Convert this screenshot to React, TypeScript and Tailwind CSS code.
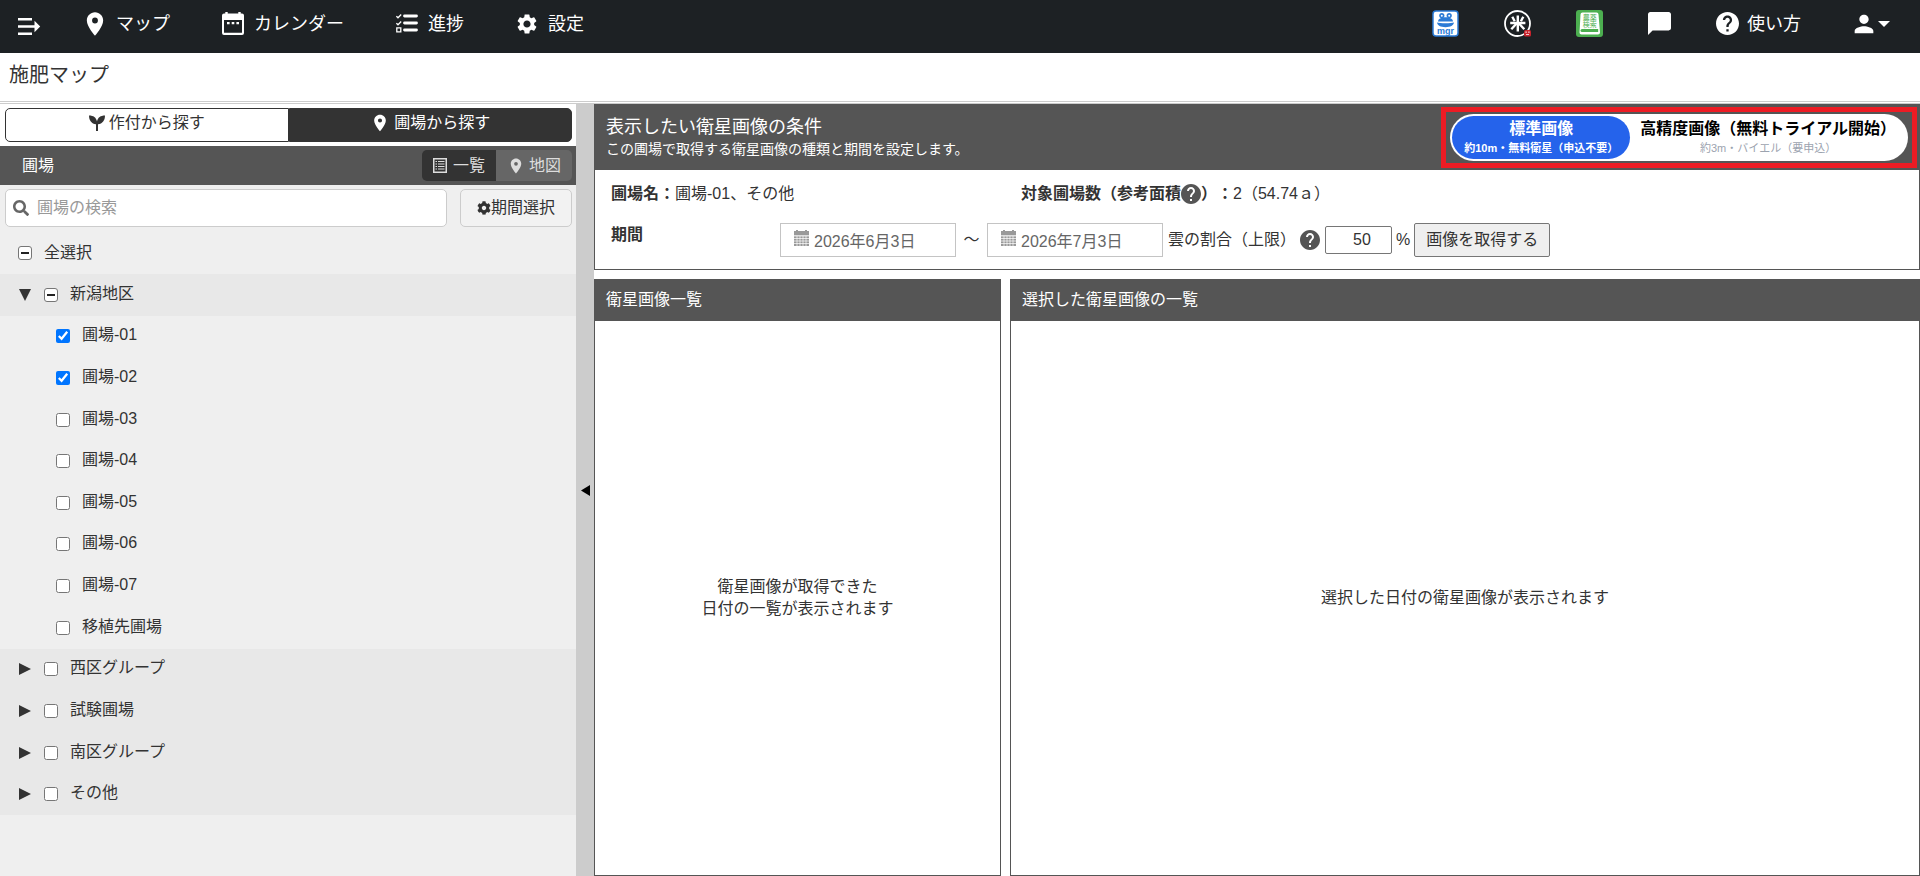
import { useEffect, useRef, useState } from "react";
import type { ReactNode } from "react";
import { MdChatBubble, MdHelp, MdPerson, MdPlace, MdSettings } from "react-icons/md";
import { FaCog, FaSearch } from "react-icons/fa";

const FIELDS = [
  "圃場-01",
  "圃場-02",
  "圃場-03",
  "圃場-04",
  "圃場-05",
  "圃場-06",
  "圃場-07",
  "移植先圃場",
];

const CLOSED_GROUPS = ["西区グループ", "試験圃場", "南区グループ", "その他"];

function DrawerIcon() {
  return (
    <svg viewBox="0 0 23 17" className="h-[17px] w-[23px]" fill="currentColor">
      <path d="M0 0h14v2.400H0zM0 7.300h17v2.400H0zM0 14.600h14V17H0zM16.500 2.800l5.700 5.700-5.700 5.700z" />
    </svg>
  );
}

function CalendarIcon() {
  return (
    <svg viewBox="0 0 22 23" className="h-[23px] w-[22px]" fill="currentColor">
      <path
        fillRule="evenodd"
        d="M3.300 0h2.400v1.500h10.600V0h2.400v1.500H20a2 2 0 0 1 2 2V21a2 2 0 0 1-2 2H2a2 2 0 0 1-2-2V3.500a2 2 0 0 1 2-2h1.300zM2 8v12.800h18V8zM5 10h2.600v2.300H5zM9.700 10h2.600v2.300H9.700zM14.400 10H17v2.300h-2.600z"
      />
    </svg>
  );
}

function ChecklistIcon() {
  return (
    <svg viewBox="0 0 22 19" className="h-[19px] w-[22px]" fill="none" stroke="currentColor">
      <path strokeWidth="2.800" strokeLinecap="round" d="M8.500 2h12M8.500 9h12M8.500 16h12" />
      <path strokeWidth="1.300" d="M.4 2.200L2 3.800 5.200.5M.4 9.200L2 10.800l3.200-3.300M.8 13.800h4v4h-4z" />
    </svg>
  );
}

function FrogIcon() {
  return (
    <svg viewBox="0 0 27 27" className="size-[27px]">
      <rect x="1" y="1" width="25" height="25" rx="3" fill="#fff" stroke="#2b7bd6" strokeWidth="1.500" />
      <circle cx="9.800" cy="5.600" r="2.600" fill="#2b7bd6" />
      <circle cx="17.200" cy="5.600" r="2.600" fill="#2b7bd6" />
      <circle cx="9.800" cy="5.800" r="1" fill="#fff" />
      <circle cx="17.200" cy="5.800" r="1" fill="#fff" />
      <path fill="#2b7bd6" d="M6 11.600C6 9 9 7.200 13.500 7.200S21 9 21 11.600z" />
      <path fill="#2b7bd6" d="M5 12.600c2.500 1 14.500 1 17 0-.5 3-3.500 4.600-8.500 4.600S5.500 15.600 5 12.600z" />
      <text x="13.500" y="23.500" fontSize="9" fontWeight="700" textAnchor="middle" fill="#2b7bd6">
        mgr
      </text>
    </svg>
  );
}

function RiceIcon() {
  return (
    <svg viewBox="0 0 27 27" className="size-[27px]">
      <circle cx="13.500" cy="13.500" r="12.500" fill="none" stroke="#fff" strokeWidth="1.800" />
      <g stroke="#fff" strokeWidth="2.400">
        <path d="M13.800 5.500v16M6.200 13h15.200" />
        <path d="M8.300 6.800l2.400 4.400M19.300 6.800l-2.400 4.400M12.600 13.500L7.300 19.300M15 13.500l5.300 5.800" />
      </g>
      <rect x="20" y="20" width="7" height="6.500" rx="1.500" fill="#c8232c" />
      <path fill="#fff" d="M21.500 21.500h1.200v1.200h-1.200zM24.300 21.500h1.200v1.200h-1.200zM22 24h3v.800h-3z" />
    </svg>
  );
}

function BookIcon() {
  return (
    <svg viewBox="0 0 27 27" className="size-[27px]">
      <rect width="27" height="27" rx="3" fill="#4caf50" />
      <path fill="#fff" d="M6.500 2.500h14a2 2 0 0 1 2 2L24 22.500a2 2 0 0 1-2 2H5.500a2 2 0 0 1-2-2l1-18a2 2 0 0 1 2-2z" />
      <path fill="#4caf50" d="M6 19h16.200v3H6a1.500 1.500 0 0 1 0-3z" />
      <g fill="#4caf50" fontSize="7" textAnchor="middle">
        <text x="13.800" y="9.800">農薬</text>
        <text x="13.800" y="16.800">検索</text>
      </g>
    </svg>
  );
}

function SproutIcon() {
  return (
    <svg viewBox="0 0 16 16" className="size-4" fill="currentColor">
      <path d="M0 .5C4.500.5 7.200 2.500 8 6.500 8.800 2.500 11.500.5 16 .5c0 5-2.500 8.300-7 8.800V16H7V9.300C2.500 8.800 0 5.500 0 .5z" />
    </svg>
  );
}

function ListIcon() {
  return (
    <svg viewBox="0 0 14 15" className="h-[15px] w-[14px]" fill="none" stroke="currentColor">
      <path strokeWidth="1.500" d="M.75.75h12.500v13.500H.75z" />
      <path
        strokeWidth="1.200"
        d="M5 3.500h6.500M5 6h6.500M5 8.500h6.500M5 11h6.500M2.500 3.500H4M2.500 6H4M2.500 8.500H4M2.500 11H4"
      />
    </svg>
  );
}

function DateIcon() {
  return (
    <svg viewBox="0 0 15 16" className="h-4 w-[15px]">
      <path fill="#999" d="M0 1h2V0h2v1h7V0h2v1h2v4.500H0zM0 6h15v10H0z" />
      <path stroke="#fff" strokeWidth=".7" d="M0 6h15M0 8.500h15M0 11h15M0 13.500h15M3 6v10M6 6v10M9 6v10M12 6v10" />
    </svg>
  );
}

function Triangle({ open }: { open?: boolean }) {
  return (
    <svg viewBox="0 0 12 12" className="size-3 fill-[#333]">
      <path d={open ? "M0 0h12L6 12z" : "M0 0v12l12-6z"} />
    </svg>
  );
}

function HelpMark() {
  return <MdHelp viewBox="2 2 20 20" className="size-5 shrink-0 text-[#555]" />;
}

function PartialCheckbox({ id }: { id: string }) {
  const ref = useRef<HTMLInputElement>(null);

  useEffect(() => {
    if (ref.current) ref.current.indeterminate = true;
  }, []);

  return (
    <input
      ref={ref}
      id={id}
      type="checkbox"
      className="grid size-[14px] shrink-0 appearance-none place-content-center rounded-[3px] border border-[#767676] bg-white before:h-0.5 before:w-2 before:bg-[#222] before:content-['']"
    />
  );
}

function NavItem({ icon, label }: { icon: ReactNode; label: string }) {
  return (
    <a href="#" className="flex items-center gap-[7px] text-lg">
      <span className="flex w-7 justify-center">{icon}</span>
      {label}
    </a>
  );
}

function GroupRow({ name, open }: { name: string; open?: boolean }) {
  return (
    <li className="flex items-center bg-[#e8e8e8] pl-[19px]">
      <button type="button" aria-label={name} className="mr-[13px]">
        <Triangle open={open} />
      </button>
      {open ? (
        <PartialCheckbox id={name} />
      ) : (
        <input id={name} type="checkbox" className="size-[14px] shrink-0" />
      )}
      <label htmlFor={name} className="pb-0.5 pl-3">
        {name}
      </label>
    </li>
  );
}

function DateField({ label, value }: { label: string; value: string }) {
  const [text, setText] = useState(value);

  return (
    <label className="flex h-[34px] w-44 items-center gap-[5px] border border-[#c4c4c4] bg-white pl-[13px]">
      <span className="pb-1">
        <DateIcon />
      </span>
      <input
        type="text"
        aria-label={label}
        value={text}
        onChange={(e) => setText(e.target.value)}
        className="w-full min-w-0 pt-1 text-[#666] outline-none"
      />
    </label>
  );
}

type ResultPanelProps = {
  title: string;
  className: string;
  children: ReactNode;
};

function ResultPanel({ title, className, children }: ResultPanelProps) {
  return (
    <section className={className}>
      <h2 className="bg-[#555] px-3 py-[9px] leading-6 text-white">{title}</h2>
      <div className="flex flex-1 items-center justify-center border border-t-0 border-[#555] text-center leading-[22px]">
        {children}
      </div>
    </section>
  );
}

export default function App() {
  const [checked, setChecked] = useState<string[]>(["圃場-01", "圃場-02"]);
  const [cloud, setCloud] = useState("50");

  const toggle = (name: string) =>
    setChecked((prev) =>
      prev.includes(name) ? prev.filter((n) => n !== name) : [...prev, name],
    );

  return (
    <div className="flex min-h-screen flex-col bg-white font-['Liberation_Sans','Noto_Sans_CJK_JP',sans-serif] text-base text-[#333] [text-spacing-trim:space-all]">
      <header className="flex h-[53px] items-center bg-[#1d2124] pb-1.5 text-white">
        <nav className="flex flex-1 items-center pl-[18px]">
          <button type="button" aria-label="メニュー" className="mr-10 pt-1.5">
            <DrawerIcon />
          </button>
          <div className="flex items-center gap-[49px]">
            <NavItem icon={<MdPlace className="size-7" />} label="マップ" />
            <NavItem icon={<CalendarIcon />} label="カレンダー" />
            <NavItem icon={<ChecklistIcon />} label="進捗" />
            <NavItem icon={<MdSettings className="size-6" />} label="設定" />
          </div>
        </nav>
        <div className="flex items-center gap-[45px] pr-[30px]">
          <a href="#" aria-label="mgr">
            <FrogIcon />
          </a>
          <a href="#" aria-label="米">
            <RiceIcon />
          </a>
          <a href="#" aria-label="農薬検索">
            <BookIcon />
          </a>
          <a href="#" aria-label="チャット">
            <MdChatBubble viewBox="2 2 20 20" className="size-[23px]" />
          </a>
          <a href="#" className="flex items-center gap-2 text-lg">
            <MdHelp viewBox="2 2 20 20" className="size-[23px]" />
            使い方
          </a>
          <button type="button" aria-label="アカウント" className="flex items-center pl-1">
            <MdPerson className="size-7" />
            <svg viewBox="0 0 12 6" className="h-1.5 w-3" fill="currentColor">
              <path d="M0 0h12L6 6z" />
            </svg>
          </button>
        </div>
      </header>

      <div className="h-[51px] border-b border-[#ccc]">
        <h1 className="h-[49px] border-b border-[#ccc] px-[9px] pt-2 text-xl leading-7">施肥マップ</h1>
      </div>

      <div className="flex flex-1">
        <aside className="flex w-[576px] shrink-0 flex-col bg-[#efefef]">
          <div className="flex bg-white py-1 pr-1 pl-[5px]">
            <button
              type="button"
              className="flex h-[34px] flex-1 items-center justify-center gap-1 rounded-l-[5px] border border-[#333] pb-1"
            >
              <SproutIcon />
              作付から探す
            </button>
            <button
              type="button"
              className="flex h-[34px] flex-1 items-center justify-center gap-1 rounded-r-[5px] border border-[#333] bg-[#333] pb-1 text-white"
            >
              <MdPlace className="size-5" />
              圃場から探す
            </button>
          </div>

          <div className="flex h-[39px] items-center justify-between bg-[#555] pr-1 pl-[22px] text-white">
            <h2>圃場</h2>
            <div className="flex h-[31px]">
              <button
                type="button"
                className="flex w-[74px] items-center justify-center gap-1.5 rounded-l-[5px] bg-[#333] text-[#ddd]"
              >
                <ListIcon />
                一覧
              </button>
              <button
                type="button"
                className="flex w-[76px] items-center justify-center gap-1 rounded-r-[5px] bg-[#666] text-[#ddd]"
              >
                <MdPlace className="size-[18px]" />
                地図
              </button>
            </div>
          </div>

          <div className="flex gap-[13px] py-1 pr-1 pl-[5px]">
            <label className="flex h-[38px] flex-1 items-center gap-2 rounded-[5px] border border-[#ccc] bg-white px-[7px]">
              <FaSearch className="size-4 shrink-0 text-[#666]" />
              <input
                type="search"
                aria-label="圃場の検索"
                placeholder="圃場の検索"
                className="w-full outline-none placeholder:text-[#999]"
              />
            </label>
            <button
              type="button"
              className="flex w-28 items-center justify-center rounded-[5px] border border-[#ccc] bg-[#f2f2f2]"
            >
              <FaCog className="size-[14px]" />
              期間選択
            </button>
          </div>

          <div className="flex h-[43px] items-center pl-[18px]">
            <PartialCheckbox id="select-all" />
            <label htmlFor="select-all" className="pl-3">
              全選択
            </label>
          </div>
          <ul className="grid h-[541px] auto-rows-fr">
            <GroupRow name="新潟地区" open />
            {FIELDS.map((name) => (
              <li key={name} className="flex items-center pl-14">
                <input
                  id={name}
                  type="checkbox"
                  checked={checked.includes(name)}
                  onChange={() => toggle(name)}
                  className="size-[14px]"
                />
                <label htmlFor={name} className="pb-0.5 pl-3">
                  {name}
                </label>
              </li>
            ))}
            {CLOSED_GROUPS.map((name) => (
              <GroupRow key={name} name={name} />
            ))}
          </ul>
        </aside>

        <button
          type="button"
          aria-label="サイドバーを閉じる"
          className="flex w-[18px] shrink-0 items-center justify-center bg-[#ccc]"
        >
          <svg viewBox="0 0 9 11" className="h-[11px] w-[9px]">
            <path d="M9 0v11L0 5.500z" />
          </svg>
        </button>

        <main className="flex min-w-0 flex-1 flex-col gap-[9px]">
          <section>
            <div className="flex h-[66px] items-center justify-between bg-[#555] pr-[3px] pl-3 text-white">
              <div>
                <h2 className="text-lg leading-6">表示したい衛星画像の条件</h2>
                <p className="text-sm leading-5">この圃場で取得する衛星画像の種類と期間を設定します。</p>
              </div>
              <div className="border-[5px] border-[#ed1c24] px-1 py-0.5">
                <div className="flex rounded-full bg-white p-0.5 font-bold">
                  <button type="button" className="rounded-full bg-[#2563eb] px-3 py-0.5">
                    <span className="block leading-[22px]">標準画像</span>
                    <span className="block text-[11px] leading-[17px]">約10m・無料衛星（申込不要）</span>
                  </button>
                  <button type="button" className="rounded-full px-[10px] py-0.5 text-black">
                    <span className="block leading-[22px]">高精度画像（無料トライアル開始）</span>
                    <span className="block text-[11px] leading-[17px] font-normal text-[#9ca3af]">
                      約3m・バイエル（要申込）
                    </span>
                  </button>
                </div>
              </div>
            </div>

            <div className="border border-t-0 border-[#555] py-3 pl-4">
              <div className="flex items-center leading-6">
                <p className="w-[410px]">
                  <b>圃場名：</b>圃場-01、その他
                </p>
                <p className="flex items-center">
                  <b>対象圃場数（参考面積</b>
                  <HelpMark />
                  <b>）：</b>2（54.74ａ）
                </p>
              </div>
              <div className="mt-[17px] flex">
                <b className="w-[169px]">期間</b>
                <div className="flex items-center">
                  <DateField label="開始日" value="2026年6月3日" />
                  <span className="w-[31px] text-center">～</span>
                  <DateField label="終了日" value="2026年7月3日" />
                  <label htmlFor="cloud" className="pr-1 pl-[5px]">
                    雲の割合（上限）
                  </label>
                  <HelpMark />
                  <input
                    id="cloud"
                    type="number"
                    value={cloud}
                    onChange={(e) => setCloud(e.target.value)}
                    className="ml-[5px] h-7 w-[67px] rounded-xs border border-[#767676] pl-[22px] text-center"
                  />
                  <span className="px-1">%</span>
                  <button
                    type="button"
                    className="h-[34px] rounded-xs border border-[#767676] bg-[#efefef] px-[11px]"
                  >
                    画像を取得する
                  </button>
                </div>
              </div>
            </div>
          </section>

          <div className="flex flex-1 gap-[9px]">
            <ResultPanel title="衛星画像一覧" className="flex w-[407px] flex-col">
              <p>
                衛星画像が取得できた
                <br />
                日付の一覧が表示されます
              </p>
            </ResultPanel>
            <ResultPanel title="選択した衛星画像の一覧" className="flex flex-1 flex-col">
              <p>選択した日付の衛星画像が表示されます</p>
            </ResultPanel>
          </div>
        </main>
      </div>
    </div>
  );
}
